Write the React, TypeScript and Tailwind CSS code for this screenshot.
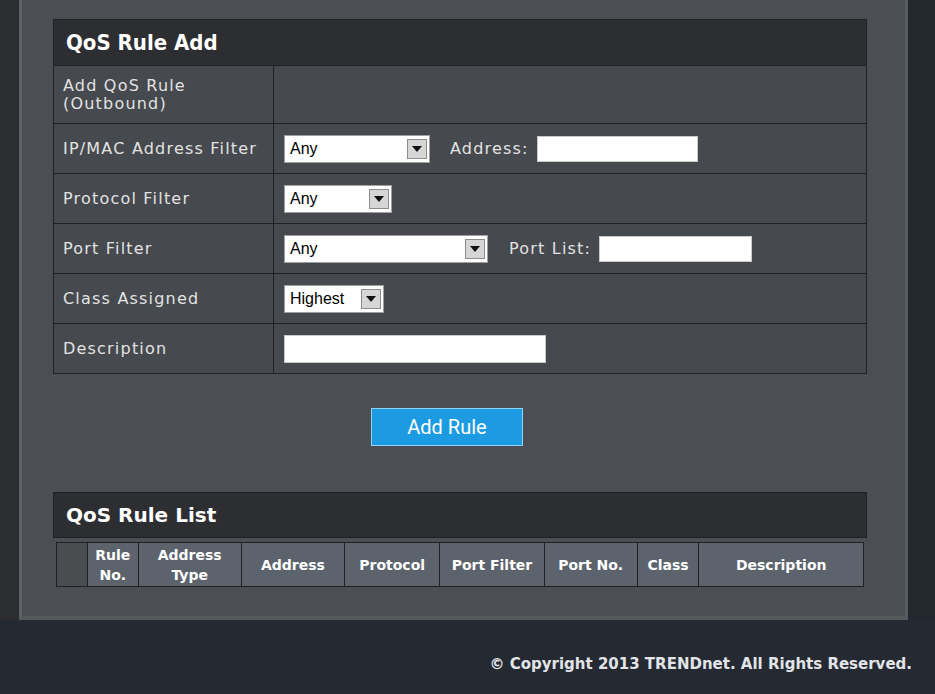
import type { ReactNode } from 'react';

const sans = { fontFamily: '"DejaVu Sans", Verdana, sans-serif' };
const arial = { fontFamily: '"Liberation Sans", Arial, sans-serif' };

function Arrow() {
  return (
    <div className="flex h-[20px] w-[20px] items-center justify-center border border-[#8c8c8c] bg-[#d6d6d6]">
      <svg width="10" height="6" viewBox="0 0 10 6">
        <path d="M0 0h10L5 6z" fill="#111" />
      </svg>
    </div>
  );
}

function Select({ value, className }: { value: string; className: string }) {
  return (
    <div
      className={`flex h-[28px] items-center justify-between border border-[#a0a0a0] bg-white pl-[5px] pr-[2px] text-[16px] text-black ${className}`}
      style={arial}
    >
      <span>{value}</span>
      <Arrow />
    </div>
  );
}

function TextBox({ className }: { className: string }) {
  return <div className={`h-[26px] border border-[#c8c8c8] bg-white ${className}`} />;
}

function Row({ label, children, tall }: { label: ReactNode; children?: ReactNode; tall?: boolean }) {
  return (
    <div className={`grid grid-cols-[220px_1fr] border-t border-[#1f2124] ${tall ? 'h-[58px]' : 'h-[50px]'}`}>
      <div className="flex items-center border-r border-[#1f2124] pl-[9px] text-[16px] leading-[18px] tracking-[1.2px] text-[#e2e2e2]">
        {label}
      </div>
      <div className="flex items-center pl-[10px]">{children}</div>
    </div>
  );
}

const inlineLabel = 'text-[16px] tracking-[1.2px] text-[#e2e2e2]';

const columns = [
  { w: 'w-[51px]', t: <>Rule<br />No.</> },
  { w: 'w-[103px]', t: <>Address<br />Type</> },
  { w: 'w-[104px]', t: 'Address' },
  { w: 'w-[95px]', t: 'Protocol' },
  { w: 'w-[105px]', t: 'Port Filter' },
  { w: 'w-[93px]', t: 'Port No.' },
  { w: 'w-[62px]', t: 'Class' },
  { w: 'w-[165px]', t: 'Description' },
];

export default function App() {
  return (
    <div className="flex h-[694px] w-[935px] flex-col overflow-hidden bg-[#252932]" style={sans}>
      <div className="flex h-[620px]">
        <div className="w-[19px] bg-[#2b2d31]" />

        {/* Panel */}
        <div className="flex w-[889px] flex-col border-x-[3px] border-b-[4px] border-l-[#5f6267] border-r-[#5a5d62] border-b-[#55585d] bg-[#4b4e53] pl-[31px] pr-[38px] pt-[19px]">
          {/* QoS Rule Add */}
          <div className="border border-[#1f2124] bg-[#46494d]">
            <div className="flex h-[45px] items-center bg-[#2c2e32] pl-[12px] text-[22px] font-bold text-white" style={{ fontFamily: '"DejaVu Sans Condensed", "Liberation Sans Narrow", Roboto, sans-serif' }}>
              QoS Rule Add
            </div>
            <Row tall label={<span>Add QoS Rule<br />(Outbound)</span>} />
            <Row label="IP/MAC Address Filter">
              <Select value="Any" className="w-[146px]" />
              <span className={`ml-[20px] ${inlineLabel}`}>Address:</span>
              <TextBox className="ml-[8px] w-[161px]" />
            </Row>
            <Row label="Protocol Filter">
              <Select value="Any" className="w-[108px]" />
            </Row>
            <Row label="Port Filter">
              <Select value="Any" className="w-[204px]" />
              <span className={`ml-[21px] ${inlineLabel}`}>Port List:</span>
              <TextBox className="ml-[8px] w-[153px]" />
            </Row>
            <Row label="Class Assigned">
              <Select value="Highest" className="w-[100px]" />
            </Row>
            <Row label="Description">
              <TextBox className="h-[28px] w-[262px]" />
            </Row>
          </div>

          {/* Add Rule button */}
          <div className="mt-[34px] flex pl-[318px]">
            <div
              className="flex h-[38px] w-[152px] items-center justify-center border border-[#8fd4f7] bg-[#1d9be2] text-[20px] text-white"
              style={{ fontFamily: 'Roboto, sans-serif' }}
            >
              Add Rule
            </div>
          </div>

          {/* QoS Rule List */}
          <div className="mt-[46px] flex h-[46px] items-center border border-[#1f2124] bg-[#2c2e32] pl-[12px] text-[20px] font-bold text-white">
            QoS Rule List
          </div>
          <div className="mx-[3px] mt-[4px] flex h-[45px] border border-[#1f2124] text-[14px] font-bold leading-[20px] text-white">
            <div className="w-[30px] bg-[#4a4c50]" />
            {columns.map((c, i) => (
              <div key={i} className={`flex items-center justify-center border-l border-[#1f2124] bg-[#5c636d] text-center ${c.w}`}>
                <span>{c.t}</span>
              </div>
            ))}
          </div>
        </div>

        <div className="flex-1 bg-[#23272e]" />
      </div>

      {/* Footer */}
      <div className="flex flex-1 justify-end pr-[23px] pt-[33px]">
        <span className="text-[15px] font-bold text-[#e2e4e8]">© Copyright 2013 TRENDnet. All Rights Reserved.</span>
      </div>
    </div>
  );
}
